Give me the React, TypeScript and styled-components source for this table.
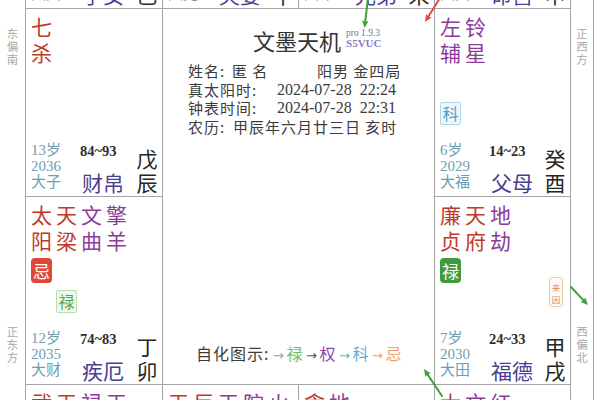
import React from "react";
import styled, { createGlobalStyle } from "styled-components";

const LINE = "#a4a4a4";
const RED = "#c0392b";
const PURPLE = "#8b3b98";
const SANS = `"Noto Sans CJK SC", "Noto Sans", sans-serif`;
const SERIF = `"Liberation Serif", "Noto Sans CJK SC", serif`;

type Tone = "main" | "minor";
type HuaKind = "lu" | "quan" | "ke" | "ji";

interface Star {
  name: string;
  tone: Tone;
  hua?: HuaKind;
  self?: HuaKind;
}

interface PalaceData {
  row: number;
  col: number;
  stars: Star[];
  name: string;
  gz: string;
  da: string;
  age: string;
  year: string;
  range: string;
  note?: string;
}

const HUA_TEXT: Record<HuaKind, string> = { lu: "禄", quan: "权", ke: "科", ji: "忌" };
const HUA_FILL: Record<HuaKind, string> = {
  lu: "#3f9c3c",
  quan: "#8e44ad",
  ke: "#3b8fc4",
  ji: "#e2453a",
};
const SELF_STYLE: Record<HuaKind, { fg: string; bg: string; bd: string }> = {
  lu: { fg: "#4fa64f", bg: "#eff8ec", bd: "#b9dcb4" },
  quan: { fg: "#8e44ad", bg: "#f5eef8", bd: "#d5b8e0" },
  ke: { fg: "#4c9fc9", bg: "#eef7fb", bd: "#aed6e8" },
  ji: { fg: "#e58a55", bg: "#fdf3ec", bd: "#f0cdb4" },
};

const GlobalStyle = createGlobalStyle`
  html, body { margin: 0; padding: 0; background: #ffffff; }
  body { font-family: ${SANS}; }
`;

const Screen = styled.div`
  position: relative;
  width: 600px;
  height: 400px;
  overflow: hidden;
  background: #ffffff;
`;

const Chart = styled.div`
  display: grid;
  grid-template-columns: 25px 138px 136px 136px 136px 23px;
  grid-template-rows: repeat(4, 188px);
  margin-top: -179px;
`;

const Side = styled.div<{ $row: number; $col: number; $edge?: boolean; $at?: "top" | "bottom" }>`
  grid-row: ${(p) => p.$row};
  grid-column: ${(p) => p.$col};
  box-sizing: border-box;
  display: flex;
  flex-direction: column;
  align-items: center;
  justify-content: ${(p) => (p.$at === "bottom" ? "flex-end" : "flex-start")};
  padding: ${(p) => (p.$at === "bottom" ? "0 0 21px" : "18px 0 0")};
  border-right: ${(p) => (p.$edge ? `1px solid ${LINE}` : "none")};
`;

const Direction = styled.div`
  width: 12px;
  font-size: 11.5px;
  line-height: 13px;
  color: #a8a8a8;
  text-align: center;
`;

const PalaceCell = styled.div<{ $row: number; $col: number; $lead?: boolean }>`
  grid-row: ${(p) => p.$row};
  grid-column: ${(p) => p.$col};
  position: relative;
  box-sizing: border-box;
  display: flex;
  flex-direction: column;
  min-height: 0;
  overflow: hidden;
  border-right: 1px solid ${LINE};
  border-bottom: 1px solid ${LINE};
  border-left: ${(p) => (p.$lead ? `1px solid ${LINE}` : "none")};
`;

const Stars = styled.div`
  flex: 1;
  display: flex;
  align-items: flex-start;
  gap: 4px;
  padding: 4px 0 0 5px;
`;

const StarColumn = styled.div`
  width: 21px;
  display: flex;
  flex-direction: column;
  align-items: center;
`;

const StarChar = styled.div<{ $tone: Tone }>`
  width: 21px;
  font-size: 21px;
  line-height: 26px;
  text-align: center;
  color: ${(p) => (p.$tone === "main" ? RED : PURPLE)};
`;

const HuaSlot = styled.div<{ $kind?: HuaKind }>`
  margin-top: 5px;
  width: 21px;
  height: 25px;
  border-radius: 4px;
  background: ${(p) => (p.$kind ? HUA_FILL[p.$kind] : "transparent")};
  color: #ffffff;
  font-size: 17px;
  line-height: 25px;
  text-align: center;
`;

const SelfSlot = styled.div<{ $kind: HuaKind }>`
  margin-top: 7px;
  width: 21px;
  height: 23px;
  box-sizing: border-box;
  border: 1px solid ${(p) => SELF_STYLE[p.$kind].bd};
  border-radius: 2px;
  background: ${(p) => SELF_STYLE[p.$kind].bg};
  color: ${(p) => SELF_STYLE[p.$kind].fg};
  font-size: 16px;
  line-height: 21px;
  text-align: center;
`;

const NoteBadge = styled.div`
  position: absolute;
  right: 7px;
  top: 80px;
  width: 14px;
  height: 30px;
  box-sizing: border-box;
  border: 1px solid #e9cdb0;
  border-radius: 3px;
  background: #fffaf4;
  color: #e08a4c;
  font-size: 8.5px;
  line-height: 12px;
  text-align: center;
  padding-top: 3px;
`;

const Foot = styled.div`
  display: flex;
  align-items: flex-end;
  padding: 0 4px 2px 5px;
`;

const Ages = styled.div`
  width: 49px;
  flex: none;
  padding-bottom: 4px;
  font-family: ${SERIF};
  font-size: 15px;
  line-height: 16px;
  color: #6f9db3;
`;

const Mid = styled.div`
  flex: 1;
  height: 52px;
  display: flex;
  flex-direction: column;
  justify-content: space-between;
`;

const Range = styled.div`
  font-family: ${SERIF};
  font-weight: 700;
  font-size: 14.5px;
  line-height: 18px;
  color: #2f2f2f;
`;

const PalaceName = styled.div`
  padding-left: 2px;
  font-size: 21px;
  line-height: 24px;
  color: #4a3e90;
`;

const GanZhi = styled.div`
  width: 22px;
  flex: none;
  font-size: 21px;
  line-height: 24px;
  color: #262626;
  text-align: center;
`;

const Center = styled.div`
  grid-row: 2 / span 2;
  grid-column: 3 / span 2;
  box-sizing: border-box;
  border-right: 1px solid ${LINE};
  border-bottom: 1px solid ${LINE};
  display: flex;
  flex-direction: column;
  padding: 18px 0 18px;
  color: #3b3b3b;
`;

const TitleRow = styled.div`
  display: flex;
  align-items: flex-end;
  padding-left: 90px;
`;

const Title = styled.div`
  font-size: 22px;
  line-height: 26px;
  color: #333333;
`;

const Version = styled.div`
  margin-left: 5px;
  margin-bottom: 4px;
  display: flex;
  flex-direction: column;
`;

const Pro = styled.span`
  font-family: ${SERIF};
  font-size: 9.5px;
  line-height: 9px;
  color: #777777;
`;

const Code = styled.span`
  font-family: ${SERIF};
  font-weight: 700;
  font-size: 11px;
  line-height: 11px;
  color: #8d7bc4;
`;

const Info = styled.div`
  margin-top: 9px;
  padding-left: 25px;
  display: flex;
  flex-direction: column;
`;

const InfoRow = styled.div`
  display: flex;
  font-size: 15px;
  line-height: 18.5px;
  letter-spacing: 1px;
  white-space: pre;
`;

const InfoField = styled.span<{ $w: number }>`
  width: ${(p) => p.$w}px;
  flex: none;
`;

const Num = styled.span`
  font-family: ${SERIF};
  font-size: 16px;
  letter-spacing: 0;
`;

const Legend = styled.div`
  margin-top: auto;
  padding-left: 33px;
  display: flex;
  align-items: baseline;
  font-size: 16px;
  line-height: 20px;
  letter-spacing: 1px;
  white-space: pre;
`;

const LegendLabel = styled.span`
  margin-right: 1px;
`;

const LegendArrow = styled.span<{ $c: string }>`
  display: inline-block;
  width: 16px;
  text-align: center;
  color: ${(p) => p.$c};
  font-family: "DejaVu Sans", sans-serif;
  font-size: 13px;
  letter-spacing: 0;
`;

const LegendTag = styled.span<{ $c: string }>`
  color: ${(p) => p.$c};
`;

const Overlay = styled.svg`
  position: absolute;
  left: 0;
  top: 0;
  width: 600px;
  height: 400px;
  pointer-events: none;
`;

const palaces: PalaceData[] = [
  { row: 1, col: 2, stars: [], name: "子女", gz: "己巳", da: "大夫", age: "14岁", year: "2037", range: "94~103" },
  { row: 1, col: 3, stars: [], name: "夫妻", gz: "庚午", da: "大兄", age: "15岁", year: "2038", range: "104~113" },
  { row: 1, col: 4, stars: [], name: "兄弟", gz: "辛未", da: "大命", age: "16岁", year: "2039", range: "114~123" },
  { row: 1, col: 5, stars: [], name: "命宫", gz: "壬申", da: "大父", age: "5岁", year: "2028", range: "4~13" },
  {
    row: 2, col: 2,
    stars: [{ name: "七杀", tone: "main" }],
    name: "财帛", gz: "戊辰", da: "大子", age: "13岁", year: "2036", range: "84~93",
  },
  {
    row: 2, col: 5,
    stars: [
      { name: "左辅", tone: "minor", self: "ke" },
      { name: "铃星", tone: "minor" },
    ],
    name: "父母", gz: "癸酉", da: "大福", age: "6岁", year: "2029", range: "14~23",
  },
  {
    row: 3, col: 2,
    stars: [
      { name: "太阳", tone: "main", hua: "ji" },
      { name: "天梁", tone: "main", self: "lu" },
      { name: "文曲", tone: "minor" },
      { name: "擎羊", tone: "minor" },
    ],
    name: "疾厄", gz: "丁卯", da: "大财", age: "12岁", year: "2035", range: "74~83",
  },
  {
    row: 3, col: 5,
    stars: [
      { name: "廉贞", tone: "main", hua: "lu" },
      { name: "天府", tone: "main" },
      { name: "地劫", tone: "minor" },
    ],
    name: "福德", gz: "甲戌", da: "大田", age: "7岁", year: "2030", range: "24~33", note: "来因",
  },
  {
    row: 4, col: 2,
    stars: [
      { name: "武曲", tone: "main" },
      { name: "天相", tone: "main" },
      { name: "禄存", tone: "minor" },
      { name: "天马", tone: "minor" },
    ],
    name: "迁移", gz: "丙寅", da: "大疾", age: "11岁", year: "2034", range: "64~73",
  },
  {
    row: 4, col: 3,
    stars: [
      { name: "天同", tone: "main" },
      { name: "巨门", tone: "main" },
      { name: "天魁", tone: "minor" },
      { name: "陀罗", tone: "minor" },
      { name: "火星", tone: "minor" },
    ],
    name: "交友", gz: "丁丑", da: "大迁", age: "10岁", year: "2033", range: "54~63",
  },
  {
    row: 4, col: 4,
    stars: [
      { name: "贪狼", tone: "main" },
      { name: "地空", tone: "minor" },
    ],
    name: "官禄", gz: "丙子", da: "大友", age: "9岁", year: "2032", range: "44~53",
  },
  {
    row: 4, col: 5,
    stars: [
      { name: "太阴", tone: "main" },
      { name: "文昌", tone: "minor" },
      { name: "红鸾", tone: "minor" },
    ],
    name: "田宅", gz: "乙亥", da: "大官", age: "8岁", year: "2031", range: "34~43",
  },
];

const sides: { row: number; col: number; text?: string; at?: "top" | "bottom"; edge?: boolean }[] = [
  { row: 1, col: 1 },
  { row: 2, col: 1, text: "东偏南", at: "top" },
  { row: 3, col: 1, text: "正东方", at: "bottom" },
  { row: 4, col: 1 },
  { row: 1, col: 6, edge: true },
  { row: 2, col: 6, text: "正西方", at: "top", edge: true },
  { row: 3, col: 6, text: "西偏北", at: "bottom", edge: true },
  { row: 4, col: 6, edge: true },
];

const legend: { tag: string; arrow: string; color: string }[] = [
  { tag: "禄", arrow: "#7cb87c", color: "#6cbf6c" },
  { tag: "权", arrow: "#555555", color: "#8e44ad" },
  { tag: "科", arrow: "#6aaecb", color: "#5ab0d6" },
  { tag: "忌", arrow: "#eda072", color: "#eda072" },
];

function Palace({ p }: { p: PalaceData }) {
  const hasHuaRow = p.stars.some((s) => s.hua || s.self);
  return (
    <PalaceCell $row={p.row} $col={p.col} $lead={p.col === 2}>
      <Stars>
        {p.stars.map((s) => (
          <StarColumn key={s.name}>
            {s.name.split("").map((c, i) => (
              <StarChar key={i} $tone={s.tone}>
                {c}
              </StarChar>
            ))}
            {hasHuaRow && <HuaSlot $kind={s.hua}>{s.hua ? HUA_TEXT[s.hua] : ""}</HuaSlot>}
            {s.self && <SelfSlot $kind={s.self}>{HUA_TEXT[s.self]}</SelfSlot>}
          </StarColumn>
        ))}
      </Stars>
      {p.note && (
        <NoteBadge>
          {p.note.split("").map((c, i) => (
            <div key={i}>{c}</div>
          ))}
        </NoteBadge>
      )}
      <Foot>
        <Ages>
          <div>{p.age}</div>
          <div>{p.year}</div>
          <div>{p.da}</div>
        </Ages>
        <Mid>
          <Range>{p.range}</Range>
          <PalaceName>{p.name}</PalaceName>
        </Mid>
        <GanZhi>
          <div>{p.gz[0]}</div>
          <div>{p.gz[1]}</div>
        </GanZhi>
      </Foot>
    </PalaceCell>
  );
}

function ArrowMark({ x1, y1, x2, y2, color }: { x1: number; y1: number; x2: number; y2: number; color: string }) {
  const a = Math.atan2(y2 - y1, x2 - x1);
  const len = 8;
  const spread = 0.42;
  const bx = x2 - Math.cos(a) * len * 0.8;
  const by = y2 - Math.sin(a) * len * 0.8;
  const l = [x2 - Math.cos(a - spread) * len, y2 - Math.sin(a - spread) * len];
  const r = [x2 - Math.cos(a + spread) * len, y2 - Math.sin(a + spread) * len];
  return (
    <g>
      <line x1={x1} y1={y1} x2={bx} y2={by} stroke={color} strokeWidth={2} strokeLinecap="round" />
      <polygon points={`${x2},${y2} ${l[0]},${l[1]} ${bx},${by} ${r[0]},${r[1]}`} fill={color} />
    </g>
  );
}

export default function App() {
  return (
    <Screen>
      <GlobalStyle />
      <Chart>
        {sides.map((s) => (
          <Side key={`${s.row}-${s.col}`} $row={s.row} $col={s.col} $at={s.at} $edge={s.edge}>
            {s.text && (
              <Direction>
                {s.text.split("").map((c, i) => (
                  <div key={i}>{c}</div>
                ))}
              </Direction>
            )}
          </Side>
        ))}
        {palaces.map((p) => (
          <Palace key={`${p.row}-${p.col}`} p={p} />
        ))}
        <Center>
          <TitleRow>
            <Title>文墨天机</Title>
            <Version>
              <Pro>pro 1.9.3</Pro>
              <Code>S5VUC</Code>
            </Version>
          </TitleRow>
          <Info>
            <InfoRow>
              <InfoField $w={44}>姓名:</InfoField>
              <InfoField $w={85}>匿 名</InfoField>
              <span>阳男 金四局</span>
            </InfoRow>
            <InfoRow>
              <InfoField $w={89}>真太阳时:</InfoField>
              <Num>2024-07-28  22:24</Num>
            </InfoRow>
            <InfoRow>
              <InfoField $w={89}>钟表时间:</InfoField>
              <Num>2024-07-28  22:31</Num>
            </InfoRow>
            <InfoRow>
              <InfoField $w={45}>农历:</InfoField>
              <span>甲辰年六月廿三日 亥时</span>
            </InfoRow>
          </Info>
          <Legend>
            <LegendLabel>自化图示:</LegendLabel>
            {legend.map((l) => (
              <React.Fragment key={l.tag}>
                <LegendArrow $c={l.arrow}>→</LegendArrow>
                <LegendTag $c={l.color}>{l.tag}</LegendTag>
              </React.Fragment>
            ))}
          </Legend>
        </Center>
      </Chart>
      <Overlay viewBox="0 0 600 400">
        <ArrowMark x1={368} y1={-2} x2={364.5} y2={28} color="#3f9f3f" />
        <ArrowMark x1={440} y1={-2} x2={425} y2={22} color="#e8473c" />
        <ArrowMark x1={571} y1={287} x2={588} y2={305} color="#3f9f3f" />
        <ArrowMark x1={442} y1={396} x2={424} y2={369} color="#3f9f3f" />
      </Overlay>
    </Screen>
  );
}
